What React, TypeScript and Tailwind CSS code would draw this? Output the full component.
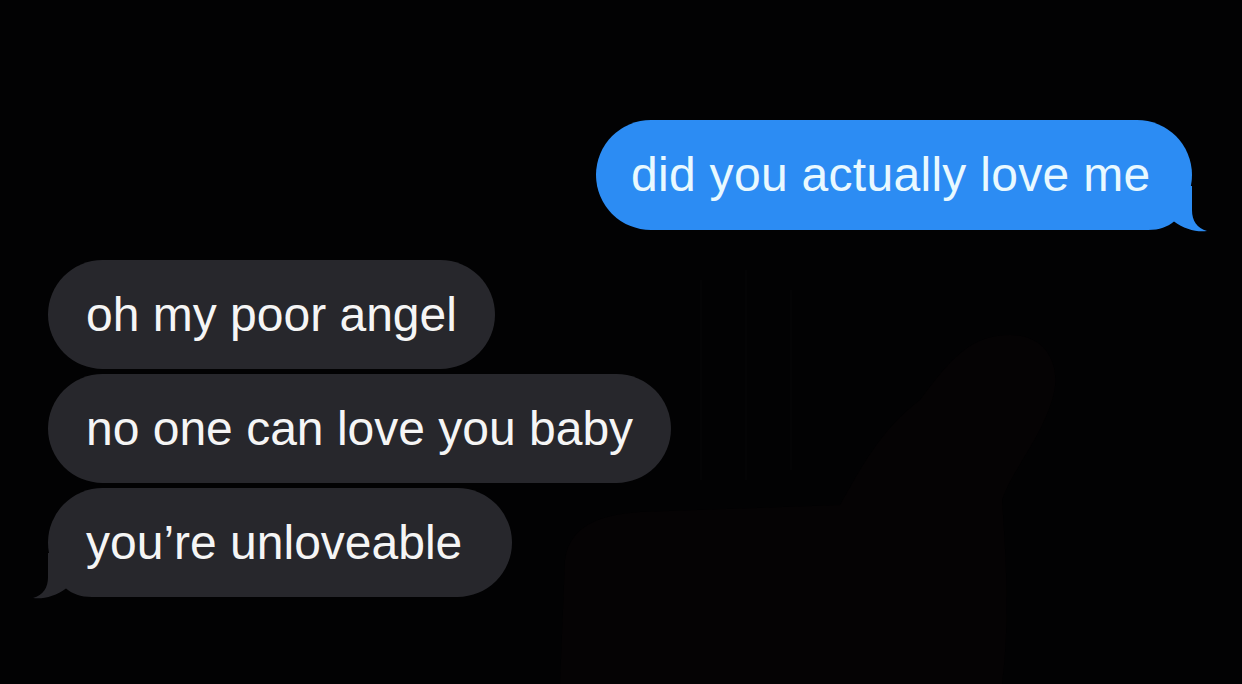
import React from "react";

const font = { fontFamily: '"Liberation Sans", Arial, sans-serif' };

function Tail({ color, side }: { color: string; side: "right" | "left" }) {
  const cls =
    side === "right"
      ? "absolute right-[-16px] bottom-[-2px] w-[80px] h-[46px] pointer-events-none"
      : "absolute left-[-16px] bottom-[-2px] w-[80px] h-[46px] pointer-events-none scale-x-[-1]";
  return (
    <svg className={cls} viewBox="-24 0 80 46" aria-hidden="true">
      <path
        d="M -24 0 L 40 0 L 40 24 C 40 35, 45 42, 55 45 C 45 46.5, 32 43, 22 35.5 C 15 41, 8 44, -4 44 L -24 44 Z"
        fill={color}
      />
    </svg>
  );
}

function Gray({ text, pr, tail }: { text: string; pr: string; tail?: boolean }) {
  return (
    <div
      className={`relative flex h-[109px] items-center rounded-[55px] bg-[#27272c] pl-[38px] ${pr}`}
    >
      <span className="relative z-10 text-[48px] leading-none text-[#f5f5f5]" style={font}>
        {text}
      </span>
      {tail && <Tail color="#27272c" side="left" />}
    </div>
  );
}

export default function App() {
  return (
    <div className="relative h-[684px] w-full overflow-hidden bg-[#020203]">
      <svg
        className="absolute inset-0 h-full w-full pointer-events-none"
        viewBox="0 0 1242 684"
        aria-hidden="true"
      >
        <path
          d="M 560 684 L 565 560 C 570 525, 600 515, 640 512 L 840 505 C 860 470, 880 430, 920 400 C 950 360, 970 335, 1010 335 C 1050 335, 1062 370, 1052 400 C 1040 440, 1012 470, 1002 500 C 1006 560, 1010 620, 1002 684 Z"
          fill="#050304"
        />
        <rect x="700" y="280" width="2" height="200" fill="#040405" />
        <rect x="745" y="270" width="2" height="210" fill="#040405" />
        <rect x="790" y="290" width="2" height="180" fill="#040405" />
      </svg>

      <div className="relative flex flex-col">
        <div className="flex justify-end pt-[120px] pr-[50px]">
          <div className="relative flex h-[110px] w-[596px] items-center rounded-[55px] bg-[#2c8cf3] pl-[35px]">
            <span
              className="relative z-10 text-[48px] leading-none tracking-[0.3px] text-[#e9f9ff]"
              style={font}
            >
              did you actually love me
            </span>
            <Tail color="#2c8cf3" side="right" />
          </div>
        </div>

        <div className="mt-[30px] flex flex-col items-start gap-[5px] pl-[48px]">
          <Gray text="oh my poor angel" pr="pr-[38px]" />
          <Gray text="no one can love you baby" pr="pr-[38px]" />
          <Gray text="you’re unloveable" pr="pr-[50px]" tail />
        </div>
      </div>
    </div>
  );
}
